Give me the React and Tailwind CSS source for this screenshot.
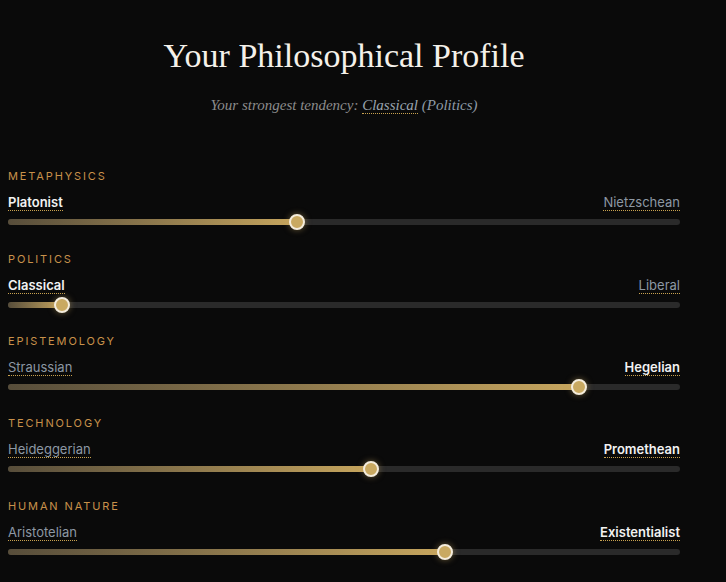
import React from "react";

const rows = [
  { cat: "METAPHYSICS", left: "Platonist", right: "Nietzschean", pct: 43, sel: "left", mt: "mt-[51px]" },
  { cat: "POLITICS", left: "Classical", right: "Liberal", pct: 8, sel: "left", mt: "mt-[26px]" },
  { cat: "EPISTEMOLOGY", left: "Straussian", right: "Hegelian", pct: 85, sel: "right", mt: "mt-[25px]" },
  { cat: "TECHNOLOGY", left: "Heideggerian", right: "Promethean", pct: 54, sel: "right", mt: "mt-[25px]" },
  { cat: "HUMAN NATURE", left: "Aristotelian", right: "Existentialist", pct: 65, sel: "right", mt: "mt-[26px]" },
];

function Name({ text, active }) {
  return (
    <span
      className={
        "inline-block leading-[16px] border-b border-dotted border-[#c9a24f] " +
        (active ? "text-[#f2f2f2] font-semibold" : "text-[#8d98a4]")
      }
    >
      {text}
    </span>
  );
}

function Row({ r }) {
  return (
    <div className={r.mt}>
      <div className="text-[11px] leading-[16px] tracking-[0.17em] text-[#c8914a]">{r.cat}</div>
      <div className="mt-[10px] flex justify-between text-[13px] h-[18px] items-start">
        <Name text={r.left} active={r.sel === "left"} />
        <Name text={r.right} active={r.sel === "right"} />
      </div>
      <div className="mt-[7px] relative h-1.5 rounded-full bg-[#2a2a2a]">
        <div
          className="absolute left-0 top-0 h-1.5 rounded-full bg-gradient-to-r from-[#574d3a] to-[#c7a65e]"
          style={{ width: r.pct + "%" }}
        />
        <div
          className="absolute top-1/2 w-4 h-4 -translate-x-1/2 -translate-y-1/2 rounded-full bg-[#c9a961] border-2 border-[#f4ecdc] shadow-[0_0_6px_rgba(201,169,97,0.5)]"
          style={{ left: r.pct + "%" }}
        />
      </div>
    </div>
  );
}

export default function App() {
  return (
    <div className="w-[726px] h-[582px] bg-[#0a0a0a] overflow-hidden" style={{ fontFamily: "Inter, 'Noto Sans', sans-serif" }}>
      <div className="w-[688px] px-2 pt-9">
        <h1
          className="text-center text-[34px] leading-[40px] text-[#f5f1ea]"
          style={{ fontFamily: "'Liberation Serif', 'DejaVu Serif', serif" }}
        >
          Your Philosophical Profile
        </h1>
        <p
          className="mt-[17px] text-center italic text-[15px] leading-[24px] text-[#8c8c8c]"
          style={{ fontFamily: "'Liberation Serif', 'DejaVu Serif', serif" }}
        >
          Your strongest tendency:{" "}
          <span className="text-[#9aa4ae] border-b border-dotted border-[#c9a24f]">Classical</span>{" "}
          <span className="text-[#8e9aa6]">(Politics)</span>
        </p>
        {rows.map((r) => (
          <Row key={r.cat} r={r} />
        ))}
      </div>
    </div>
  );
}
